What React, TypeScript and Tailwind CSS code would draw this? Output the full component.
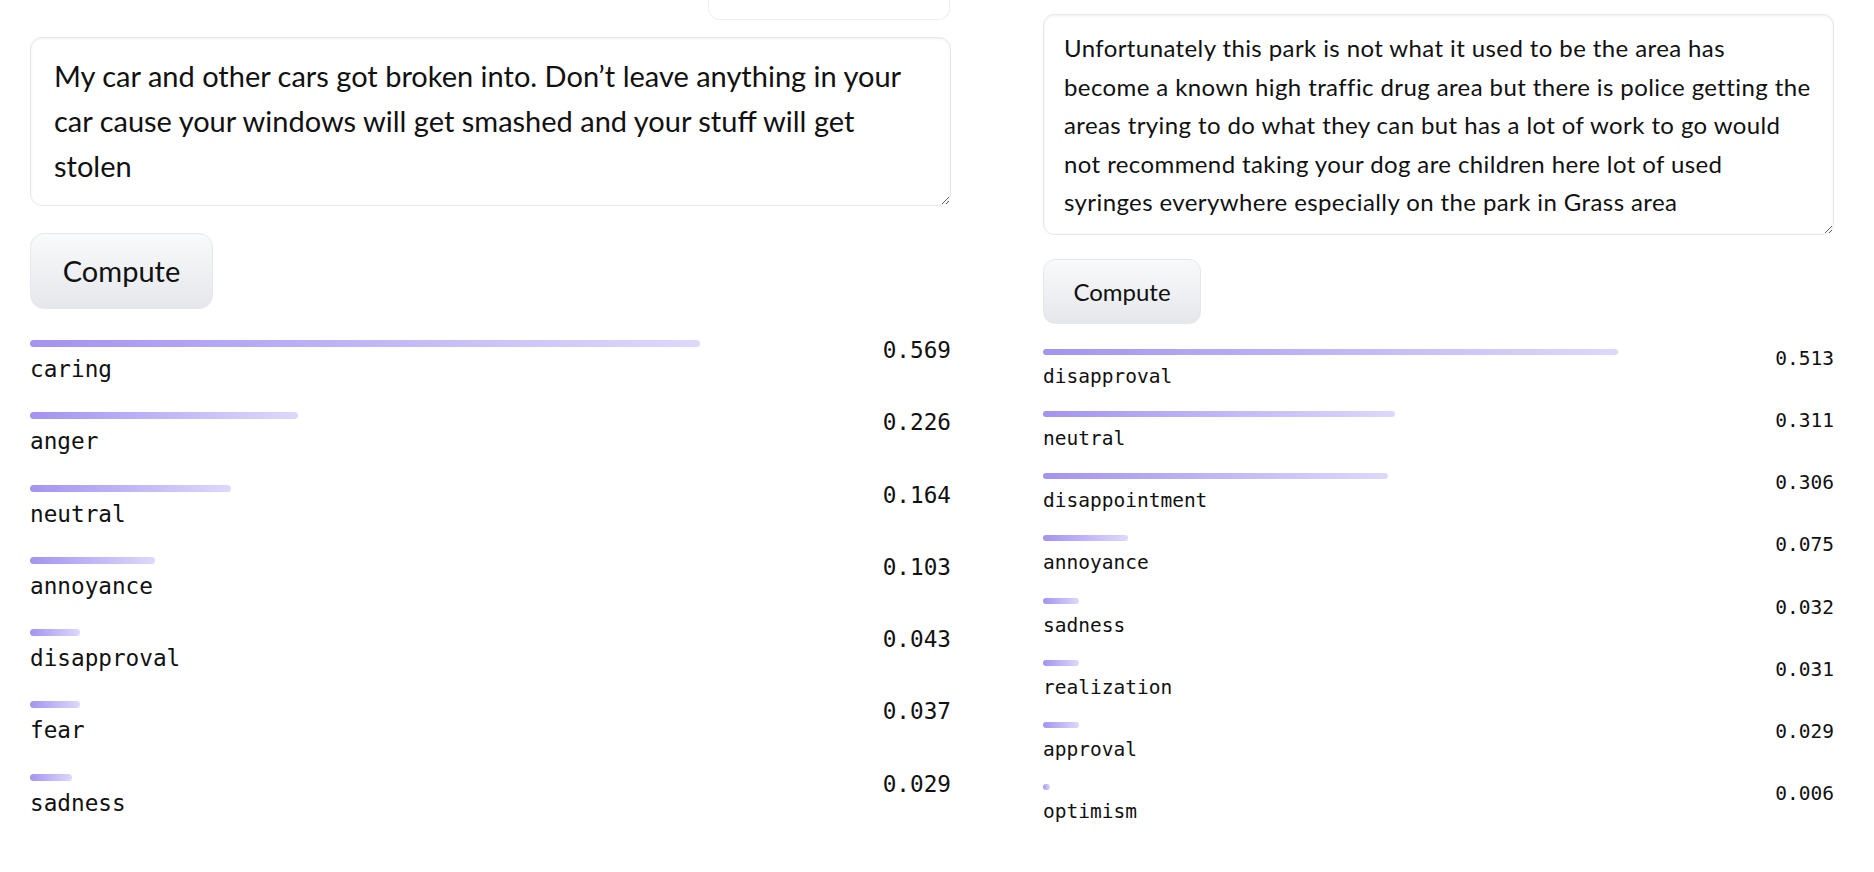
import React from "react";

type Row = { label: string; value: string; w: number };

const leftRows: Row[] = [
  { label: "caring", value: "0.569", w: 670 },
  { label: "anger", value: "0.226", w: 268 },
  { label: "neutral", value: "0.164", w: 201 },
  { label: "annoyance", value: "0.103", w: 125 },
  { label: "disapproval", value: "0.043", w: 50 },
  { label: "fear", value: "0.037", w: 50 },
  { label: "sadness", value: "0.029", w: 42 },
];

const rightRows: Row[] = [
  { label: "disapproval", value: "0.513", w: 575 },
  { label: "neutral", value: "0.311", w: 352 },
  { label: "disappointment", value: "0.306", w: 345 },
  { label: "annoyance", value: "0.075", w: 85 },
  { label: "sadness", value: "0.032", w: 36 },
  { label: "realization", value: "0.031", w: 36 },
  { label: "approval", value: "0.029", w: 36 },
  { label: "optimism", value: "0.006", w: 7 },
];

const sans = "font-['Lato','Noto_Sans',sans-serif]";
const mono = "font-['DejaVu_Sans_Mono','Liberation_Mono',monospace]";

const leftText =
  "My car and other cars got broken into. Don\u2019t leave anything in your\ncar cause your windows will get smashed and your stuff will get\nstolen";

const rightText =
  "Unfortunately this park is not what it used to be the area has\nbecome a known high traffic drug area but there is police getting the\nareas trying to do what they can but has a lot of work to go would\nnot recommend taking your dog are children here lot of used\nsyringes everywhere especially on the park in Grass area";

const App = () => {
  return (
    <div className="w-[1874px] h-[872px] bg-white overflow-hidden flex pl-[30px] gap-[92px] text-[#111]">
      {/* left: larger zoom */}
      <div className="w-[921px] flex flex-col">
        <div className="self-end mr-[1px] w-[242px] h-[20px] rounded-b-[12px] border border-t-0 border-[#eceef2]" />
        <textarea
          defaultValue={leftText}
          className={`${sans} mt-[17px] w-full h-[169px] rounded-[12px] border border-[#e5e7eb] shadow-[inset_0_1px_3px_rgba(0,0,0,0.06)] pl-[23px] pr-[10px] pt-[15px] text-[29px] leading-[45px] text-[#111] outline-none resize-y overflow-hidden whitespace-pre`}
        />
        <button
          className={`${sans} mt-[27px] w-[183px] h-[76px] rounded-[14px] border border-[#e5e7eb] bg-gradient-to-b from-[#f9fafb] to-[#e5e7eb] text-[29px] text-[#111]`}
        >
          Compute
        </button>
        <div className="mt-[31px] flex flex-col gap-[29.3px]">
          {leftRows.map((r) => (
            <div key={r.label} className="flex items-start justify-between">
              <div className="flex flex-col">
                <div
                  className="h-[7px] rounded-full bg-gradient-to-r from-[#a493f0] to-[#ded8fc]"
                  style={{ width: r.w }}
                />
                <div className={`${mono} mt-[8px] text-[22.7px] leading-[28px]`}>{r.label}</div>
              </div>
              <div className={`${mono} text-[22.7px] leading-[18px] pt-[1px]`}>{r.value}</div>
            </div>
          ))}
        </div>
      </div>

      {/* right: smaller zoom */}
      <div className="w-[791px] flex flex-col pt-[14px]">
        <textarea
          defaultValue={rightText}
          className={`${sans} w-full h-[221px] rounded-[11px] border border-[#e5e7eb] shadow-[inset_0_1px_3px_rgba(0,0,0,0.06)] pl-[20px] pr-[8px] pt-[14px] text-[24px] leading-[38.5px] tracking-[0.4px] text-[#111] outline-none resize-y overflow-hidden whitespace-pre`}
        />
        <button
          className={`${sans} mt-[24px] w-[158px] h-[65px] rounded-[12px] border border-[#e5e7eb] bg-gradient-to-b from-[#f9fafb] to-[#e5e7eb] text-[24px] text-[#111]`}
        >
          Compute
        </button>
        <div className="mt-[25px] flex flex-col gap-[22.15px]">
          {rightRows.map((r) => (
            <div key={r.label} className="flex items-start justify-between">
              <div className="flex flex-col">
                <div
                  className="h-[6px] rounded-full bg-gradient-to-r from-[#a493f0] to-[#ded8fc]"
                  style={{ width: r.w }}
                />
                <div className={`${mono} mt-[10px] text-[19.5px] leading-[24px]`}>{r.label}</div>
              </div>
              <div className={`${mono} text-[19.5px] leading-[16.6px] pt-[2px]`}>{r.value}</div>
            </div>
          ))}
        </div>
      </div>
    </div>
  );
};

export default App;
